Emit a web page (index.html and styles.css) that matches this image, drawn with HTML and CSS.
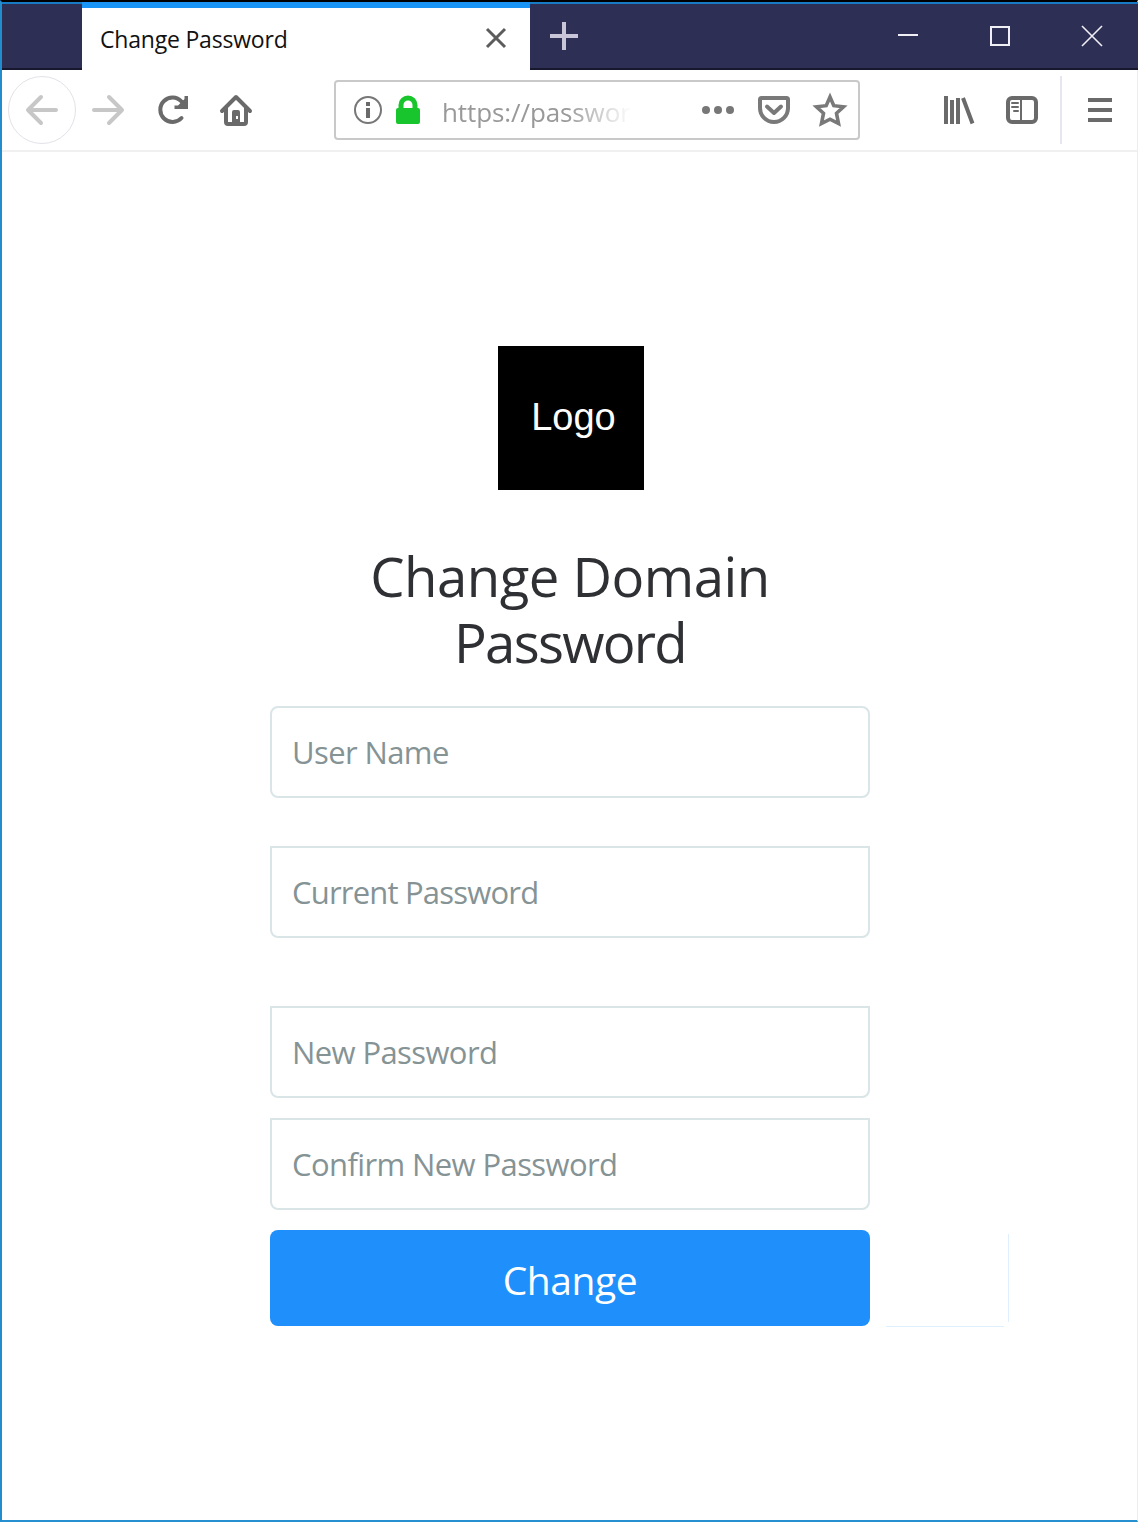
FILE: index.html
```html
<!DOCTYPE html>
<html lang="en">
<head>
<meta charset="utf-8">
<title>Change Password</title>
<link rel="stylesheet" href="styles.css">
</head>
<body>
<div class="window">
  <header class="tabbar">
    <div class="tab">
      <span class="tab-title">Change Password</span>
      <svg class="tab-close" width="20" height="20" viewBox="0 0 20 20"><path d="M1 1L19 19M19 1L1 19"/></svg>
    </div>
    <div class="tab-rest">
      <svg class="new-tab" width="28" height="28" viewBox="0 0 28 28"><path d="M14 0V28M0 14H28"/></svg>
      <div class="controls">
        <svg width="20" height="20" viewBox="0 0 20 20"><path d="M0 9H20"/></svg>
        <svg width="20" height="20" viewBox="0 0 20 20"><path d="M1 1H19V19H1Z"/></svg>
        <svg class="thin" width="20" height="20" viewBox="0 0 20 20"><path d="M0 0L20 20M20 0L0 20"/></svg>
      </div>
    </div>
  </header>
  <nav class="toolbar">
    <div class="back">
      <svg class="icon faded" width="32" height="32" viewBox="0 0 32 32"><path d="M30 16H2M15 3L2 16L15 29"/></svg>
    </div>
    <svg class="icon faded forward" width="32" height="32" viewBox="0 0 32 32"><path d="M2 16H30M17 3L30 16L17 29"/></svg>
    <svg class="icon reload" width="32" height="32" viewBox="0 0 32 32"><path d="M24.5 24A12.2 12.2 0 1 1 24.5 7.5L28 11"/><path class="solid" d="M27.5 2H31V15H17.5V11.5H21L27.5 5Z"/></svg>
    <svg class="icon home" width="32" height="32" viewBox="0 0 32 32"><path d="M2 17L16 3L30 17M6 14V28Q6 30 8 30H24Q26 30 26 28V14"/><path class="solid" fill-rule="evenodd" d="M12 31V18Q12 16 14 16H18Q20 16 20 18V31ZM16 22V25H18V22Z"/></svg>
    <div class="address">
      <svg class="info" width="28" height="28" viewBox="0 0 28 28"><circle cx="14" cy="14" r="13"/><path class="solid" d="M12 6H16V10H12ZM12 12H16V22H12Z"/></svg>
      <svg class="lock" width="24" height="28" viewBox="0 0 24 28"><path class="shackle" d="M5 14V9A7 7 0 0 1 19 9V14"/><rect x="0" y="12" width="24" height="16" rx="2"/></svg>
      <span class="url">https://passwor</span>
      <svg class="dots" width="32" height="8" viewBox="0 0 32 8"><circle cx="4" cy="4" r="4"/><circle cx="16" cy="4" r="4"/><circle cx="28" cy="4" r="4"/></svg>
      <svg class="icon action pocket" width="32" height="28" viewBox="0 0 32 28"><path d="M3.5 2H28.5Q30 2 30 3.5V12A14 14 0 0 1 2 12V3.5Q2 2 3.5 2Z"/><path d="M9 10.5L16 17L23 10.5"/></svg>
      <svg class="icon action star" width="32" height="32" viewBox="0 0 32 32"><path d="M16 3L19.8 11.7L29.5 12.8L22.5 19.3L24.5 29.5L16 25.2L7.5 29.5L9.5 19.3L2.5 12.8L12.2 11.7Z"/></svg>
    </div>
    <svg class="library" width="32" height="28" viewBox="0 0 32 28"><path d="M3 0V28M9 4V28M15 2V28M20 2L29.5 27.5"/></svg>
    <svg class="icon sidebar" width="32" height="28" viewBox="0 0 32 28"><rect x="2" y="2" width="28" height="24" rx="4"/><path class="fine" d="M15 3V25M6 7H12M6 11H12M8 15H12"/></svg>
    <div class="menu"><svg class="icon bars" width="24" height="26" viewBox="0 0 24 26"><path d="M0 3H24M0 13H24M0 23H24"/></svg></div>
  </nav>
  <main class="page">
    <div class="logo">Logo</div>
    <h1><span class="line1">Change Domain</span><span class="line2">Password</span></h1>
    <form class="form">
      <input class="rounded" type="text" placeholder="User Name">
      <input class="current" type="password" placeholder="Current Password">
      <input type="password" placeholder="New Password">
      <input type="password" placeholder="Confirm New Password">
      <div class="submit"><button type="button">Change</button></div>
    </form>
  </main>
</div>
</body>
</html>
```
FILE: styles.css
```css
* { box-sizing: border-box; }

body {
  margin: 0;
  background: #fff;
  font-family: "Open Sans", "Noto Sans", sans-serif;
}

svg { display: block; flex: none; fill: none; overflow: visible; }

.window {
  display: flex;
  flex-direction: column;
  height: 1522px;
  border-top: 2px solid #000;
  border-left: 2px solid #238ccf;
  border-right: 1px solid #e3f0f8;
  border-bottom: 2px solid #258fd0;
}

/* Tab strip */
.tabbar {
  display: flex;
  height: 68px;
  margin-right: -1px;
  padding-left: 80px;
  background: linear-gradient(#177bc6 2px, #2e2f55 2px, #2e2f55 66px, #17172d 66px);
}

.tab {
  display: flex;
  align-items: center;
  justify-content: space-between;
  width: 448px;
  padding: 0 24px 0 18px;
  border-top: 6px solid #1b95f5;
  background: #fff;
}

.tab-title { color: #111; font-size: 23px; letter-spacing: -0.2px; white-space: nowrap; }
.tab-close { margin-top: -2px; stroke: #5c5c5c; stroke-width: 3; }

.tab-rest {
  display: flex;
  flex: 1;
  align-items: flex-start;
  justify-content: space-between;
  padding: 20px 36px 0 20px;
}

.new-tab { stroke: #c8c5d8; stroke-width: 4; }
.controls { display: flex; gap: 72px; padding-top: 4px; }
.controls svg { stroke: #f0eff5; stroke-width: 2; }
.controls .thin { stroke-width: 1.6; }

/* Navigation toolbar */
.toolbar {
  display: flex;
  align-items: center;
  height: 82px;
  padding-left: 6px;
  border-bottom: 2px solid #f0f0f1;
}

.icon { stroke: #6a6a6a; stroke-width: 4; stroke-linecap: round; stroke-linejoin: round; }
.faded { stroke: #c7c7c7; }
.solid { fill: #6a6a6a; stroke: none; }

.back {
  display: flex;
  align-items: center;
  justify-content: center;
  flex: none;
  width: 68px;
  height: 68px;
  border: 1.5px solid #e2e2e9;
  border-radius: 50%;
}

.forward { margin-left: 16px; }
.reload { margin-left: 33px; }
.home { margin-left: 31px; }

.address {
  display: flex;
  align-items: center;
  flex: none;
  width: 526px;
  height: 60px;
  margin-left: 82px;
  padding-left: 18px;
  border: 2px solid #c9c9c9;
  border-radius: 4px;
}

.info { stroke: #777; stroke-width: 2; }
.lock { margin-left: 14px; fill: #18c52d; }
.shackle { fill: none; stroke: #18c52d; stroke-width: 5; }

.url {
  width: 190px;
  margin-left: 22px;
  padding-top: 3px;
  font-size: 26px;
  letter-spacing: -0.1px;
  white-space: nowrap;
  color: #999;
  -webkit-mask-image: linear-gradient(90deg, #000 125px, transparent 190px);
  mask-image: linear-gradient(90deg, #000 125px, transparent 190px);
}

.dots { margin-left: 70px; fill: #777; }
.action { stroke: #797979; }
.pocket { margin-left: 24px; margin-top: -1px; }
.star { margin-left: 24px; stroke-width: 3.6; stroke-linejoin: miter; }
.library { margin-left: 83px; stroke: #6a6a6a; stroke-width: 4; }
.sidebar { margin-left: 31px; }
.fine { stroke-width: 2; }
.bars { stroke-linecap: butt; }

.menu {
  display: flex;
  align-items: center;
  height: 68px;
  margin-left: 22px;
  padding-left: 26px;
  border-left: 2px solid #e7e6f0;
}

/* Password form */
.page {
  display: flex;
  flex: 1;
  flex-direction: column;
  align-items: center;
  padding: 194px 0 0 1px;
}

.logo {
  display: flex;
  align-items: center;
  justify-content: center;
  width: 146px;
  height: 144px;
  margin-left: 2px;
  padding: 0 0 1px 5px;
  background: #000;
  color: #fff;
  font: 38px "Liberation Sans", sans-serif;
}

h1 {
  margin: 53px 0 31px;
  color: #2f3033;
  font-size: 54.5px;
  font-weight: 400;
  line-height: 66px;
  text-align: center;
}

h1 span { display: block; }
.line1 { letter-spacing: -0.5px; }
.line2 { letter-spacing: -1.7px; }

.form {
  display: flex;
  flex-direction: column;
  width: 600px;
}

input {
  height: 92px;
  margin-bottom: 20px;
  padding: 0 20px 1px;
  border: 2px solid #d9e5e7;
  border-radius: 0 0 8px 8px;
  outline: none;
  background: #fff;
  font-family: inherit;
  font-size: 31px;
  letter-spacing: -0.6px;
}

input::placeholder { color: #859395; opacity: 1; }
input.rounded { margin-bottom: 48px; border-radius: 8px; }
input.current { margin-bottom: 68px; letter-spacing: -0.8px; }

.submit { position: relative; height: 96px; }

button {
  width: 100%;
  height: 100%;
  padding: 2px 0 0;
  border: 0;
  border-radius: 8px;
  background: #1e8ffb;
  color: #fff;
  font-family: inherit;
  font-size: 39px;
  letter-spacing: -0.4px;
}

/* Faint outline beside the button */
.submit::before,
.submit::after {
  content: "";
  position: absolute;
  background: #deeffd;
}

.submit::before { left: 738px; top: 4px; width: 1px; height: 88px; }
.submit::after { left: 616px; top: 96px; width: 118px; height: 1px; }
```
